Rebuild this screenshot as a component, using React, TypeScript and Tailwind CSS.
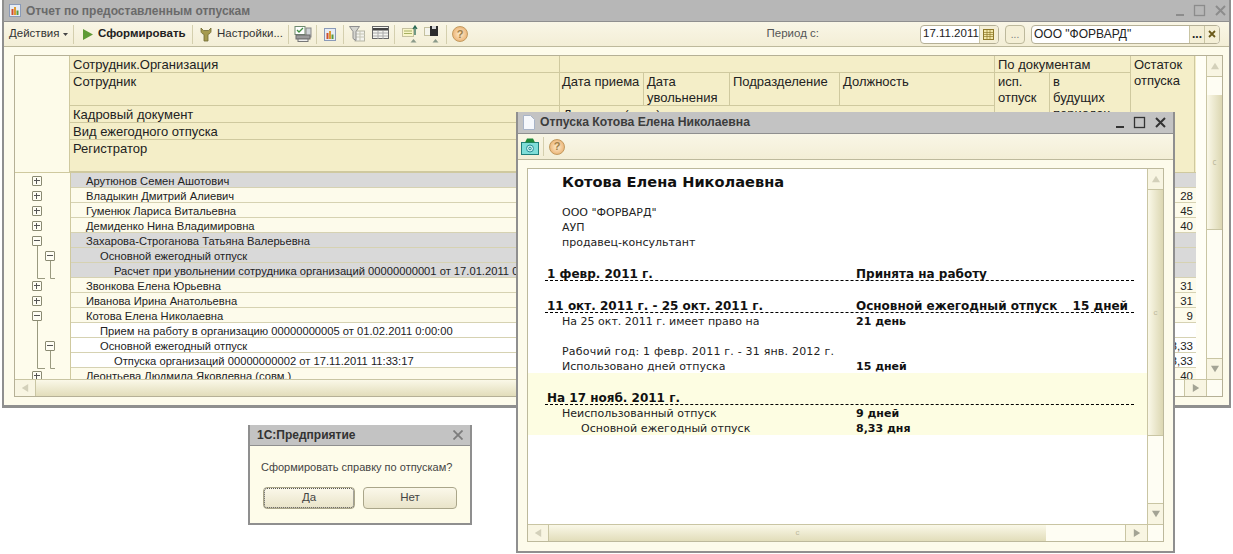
import React from 'react';

const arial = "font-['Liberation_Sans',Arial,sans-serif]";
const doc = "font-['DejaVu_Sans',Verdana,sans-serif]";

// Значок окна: свернуть / развернуть / закрыть
function WinButtons({ color, className }: { color: string; className: string }) {
  return (
    <svg width="50" height="13" viewBox="0 0 50 13" className={className} fill="none" stroke={color}>
      <rect x="0" y="10" width="8" height="2" fill={color} stroke="none" />
      <rect x="18.5" y="1.5" width="10" height="10" strokeWidth="1.3" />
      <path d="M40 2l9 9M49 2l-9 9" strokeWidth="2" />
    </svg>
  );
}

function Sep() {
  return <div className="w-px h-[19px] bg-[#d4cfae] shrink-0" />;
}

function HelpIcon() {
  return (
    <div className="w-[16px] h-[16px] rounded-full bg-radial from-[#fdeccb] to-[#e6a45c] border border-[#c39a5e] flex items-center justify-center text-[11px] leading-none font-bold text-[#a07f48]">
      ?
    </div>
  );
}

function ChartIcon() {
  return (
    <svg width="12" height="13" viewBox="0 0 12 13">
      <rect x="0.5" y="0.5" width="11" height="12" fill="#e6ecf5" stroke="#8a9ab8" />
      <rect x="2.5" y="5" width="2" height="6" fill="#d0502f" />
      <rect x="5" y="3" width="2" height="8" fill="#e09a30" />
      <rect x="7.5" y="6.5" width="2" height="4.5" fill="#5c9a3c" />
    </svg>
  );
}

function PrintIcon() {
  return (
    <svg width="18" height="16" viewBox="0 0 18 16">
      <rect x="1" y="0.5" width="10" height="8" fill="#fff" stroke="#6f8a6f" />
      <path d="M3 4l2 2 4-4" fill="none" stroke="#3f8f3f" strokeWidth="1.3" />
      <rect x="12" y="2" width="5" height="9" fill="#cfd3d6" stroke="#888" />
      <rect x="2" y="9" width="14" height="4" fill="#9a9a9a" stroke="#6a6a6a" />
      <rect x="4" y="13" width="10" height="2.5" fill="#eee" stroke="#777" />
    </svg>
  );
}

function FilterTableIcon() {
  return (
    <svg width="16" height="16" viewBox="0 0 16 16">
      <rect x="6" y="5" width="9.5" height="10" fill="#f3f3ee" stroke="#b5b5a5" />
      <path d="M6 8h10M6 11h10M11 5v10" stroke="#c5c5b5" />
      <path d="M0.5 0.5h10l-3.5 5v9l-3-2v-7z" fill="#d5d5cf" stroke="#8f8f8f" />
    </svg>
  );
}

function TableIcon() {
  return (
    <svg width="17" height="13" viewBox="0 0 17 13">
      <rect x="0.5" y="0.5" width="16" height="12" fill="#f5f5f0" stroke="#666" />
      <rect x="1" y="2" width="15" height="2.5" fill="#444" />
      <path d="M1 7h15M1 10h15M6 5v8M11 5v8" stroke="#aaa" />
    </svg>
  );
}

function SaveIcon({ up }: { up: boolean }) {
  return (
    <svg width="16" height="18" viewBox="0 0 16 18">
      {up ? (
        <>
          <rect x="0.5" y="3.5" width="11" height="8" fill="#f8f5c8" stroke="#c5c1a0" />
          <path d="M2 6h8M2 8.5h8" stroke="#a5b060" />
          <path d="M13 10V2M11 4l2-3 2 3" fill="none" stroke="#2a6a55" strokeWidth="1.3" />
        </>
      ) : (
        <>
          <rect x="0.5" y="2.5" width="7" height="8" fill="#f4f4ec" stroke="#c5c1a0" />
          <rect x="6" y="1" width="8" height="10" fill="#2d2d2d" />
          <rect x="8" y="1" width="4" height="3" fill="#d8d8d8" />
        </>
      )}
      <polygon points="11.5,14 14.5,17.5 8.5,17.5" fill="#8a9a8a" />
    </svg>
  );
}

function WrenchIcon() {
  return (
    <svg width="12" height="15" viewBox="0 0 12 15">
      <path d="M1 1v3.5c0 1.5 2 2.5 3 3V14h4V7.5c1-.5 3-1.5 3-3V1L8.5 3.5h-5z" fill="#a59a4e" stroke="#6f6a33" strokeWidth="0.8" />
    </svg>
  );
}

function Arrow({ dir }: { dir: 'up' | 'down' | 'left' | 'right' }) {
  const pts = { up: '5,1 10,9 0,9', down: '0,1 10,1 5,9', left: '9,0 9,10 1,5', right: '1,0 1,10 9,5' }[dir];
  const fill = dir === 'up' || dir === 'left' ? '#d3d0ba' : '#a3a394';
  return (
    <svg width="8" height="8" viewBox="0 0 10 10">
      <polygon points={pts} fill={fill} />
    </svg>
  );
}

function ScrollV({ before, thumb, className }: { before: number; thumb: number; className: string }) {
  return (
    <div className={`flex flex-col w-[16px] bg-[#fefdf3] border-l border-[#c9c5a3] ${className}`}>
      <div className="h-[21px] shrink-0 flex items-center justify-center border-b border-[#c9c5a3] bg-[#f8f5e2]">
        <Arrow dir="up" />
      </div>
      <div style={{ height: before }} className="shrink-0" />
      <div style={{ height: thumb }} className="shrink-0 bg-gradient-to-r from-[#faf8e8] to-[#dcd7b2] border-b border-[#c9c5a3] flex items-center justify-center text-[#bdb99c] text-[8px]">
        c
      </div>
      <div className="flex-1" />
      <div className="h-[21px] shrink-0 flex items-center justify-center border-t border-[#c9c5a3] bg-[#f8f5e2]">
        <Arrow dir="down" />
      </div>
    </div>
  );
}

function ScrollH({ thumb, className }: { thumb: number; className: string }) {
  return (
    <div className={`flex h-[17px] bg-[#fefdf3] border-t border-[#c9c5a3] ${className}`}>
      <div className="w-[21px] shrink-0 flex items-center justify-center border-r border-[#c9c5a3] bg-[#f8f5e2]">
        <Arrow dir="left" />
      </div>
      <div style={{ width: thumb }} className="shrink-0 bg-gradient-to-b from-[#faf8e8] to-[#e2ddba] flex items-center justify-center text-[#bdb99c] text-[8px]">
        c
      </div>
      <div className="flex-1" />
      <div className="w-[22px] shrink-0 flex items-center justify-center border-l border-[#c9c5a3] bg-[#f8f5e2]">
        <Arrow dir="right" />
      </div>
      <div className="w-[16px] shrink-0 border-l border-[#c9c5a3]" />
    </div>
  );
}

function TreeBox({ minus }: { minus?: boolean }) {
  return (
    <div className="w-[10px] h-[10px] border border-[#8a8a72] rounded-[1px] bg-[#fefdf3] relative z-10">
      <div className="absolute left-[1px] right-[1px] top-[3px] h-px bg-[#555]" />
      {!minus && <div className="absolute top-[1px] bottom-[1px] left-[3px] w-px bg-[#555]" />}
    </div>
  );
}

interface Row {
  text: string;
  level: number;
  box?: 'plus' | 'minus';
  boxLevel?: number;
  value?: string;
  bg: string;
}

const rows: Row[] = [
  { text: 'Арутюнов Семен Ашотович', level: 0, box: 'plus', bg: 'bg-[#d9d9d9]' },
  { text: 'Владыкин Дмитрий Алиевич', level: 0, box: 'plus', value: '28', bg: 'bg-[#fdfbeb]' },
  { text: 'Гуменюк Лариса Витальевна', level: 0, box: 'plus', value: '45', bg: 'bg-[#fdfbeb]' },
  { text: 'Демиденко Нина Владимировна', level: 0, box: 'plus', value: '40', bg: 'bg-[#fdfbeb]' },
  { text: 'Захарова-Строганова Татьяна Валерьевна', level: 0, box: 'minus', bg: 'bg-[#d9d9d9]' },
  { text: 'Основной ежегодный отпуск', level: 1, box: 'minus', boxLevel: 1, bg: 'bg-[#d9d9d9]' },
  { text: 'Расчет при увольнении сотрудника организаций 00000000001 от 17.01.2011 0:00:00', level: 2, bg: 'bg-[#d9d9d9]' },
  { text: 'Звонкова Елена Юрьевна', level: 0, box: 'plus', value: '31', bg: 'bg-[#fdfbeb]' },
  { text: 'Иванова Ирина Анатольевна', level: 0, box: 'plus', value: '31', bg: 'bg-[#fdfbeb]' },
  { text: 'Котова Елена Николаевна', level: 0, box: 'minus', value: '9', bg: 'bg-[#fdfbeb]' },
  { text: 'Прием на работу в организацию 00000000005 от 01.02.2011 0:00:00', level: 1, bg: 'bg-white' },
  { text: 'Основной ежегодный отпуск', level: 1, box: 'minus', boxLevel: 1, value: '8,33', bg: 'bg-white' },
  { text: 'Отпуска организаций 00000000002 от 17.11.2011 11:33:17', level: 2, value: '8,33', bg: 'bg-white' },
  { text: 'Леонтьева Людмила Яковлевна (совм.)', level: 0, box: 'plus', value: '40', bg: 'bg-[#fdfbeb]' },
];

const levelPad = ['pl-[15px]', 'pl-[29px]', 'pl-[43px]'];

const headCell = 'border-b border-r border-[#cfc99f] px-[3px] pt-px leading-[16px] overflow-hidden';

function TableHeader() {
  return (
    <div className="flex h-[117px] border-b border-[#cfc99f] shrink-0">
      <div className="w-[55px] shrink-0 bg-[#fdfbe9] border-r border-[#cfc99f]" />
      <div className={`flex-1 grid grid-cols-[490px_84px_86px_110px_155px_55px_81px_64px] grid-rows-[17px_33px_17px_17px_32px] bg-[#f4eec8] text-[13px] text-[#222] ${arial}`}>
        <div className={`${headCell} col-span-1`}>Сотрудник.Организация</div>
        <div className={`${headCell} col-span-4`} />
        <div className={`${headCell} col-span-2`}>По документам</div>
        <div className={`${headCell} row-span-5 border-b-0`}>Остаток отпуска</div>

        <div className={headCell}>Сотрудник</div>
        <div className={`${headCell} pl-[2px] pr-0`}>Дата приема</div>
        <div className={headCell}>Дата увольнения</div>
        <div className={headCell}>Подразделение</div>
        <div className={headCell}>Должность</div>
        <div className={`${headCell} row-span-4`}>исп. отпуск</div>
        <div className={`${headCell} row-span-4`}>в<br />будущих<br />периодах</div>

        <div className={headCell}>Кадровый документ</div>
        <div className={`${headCell} col-span-4 row-span-3`}>Документ (дата)</div>
        <div className={headCell}>Вид ежегодного отпуска</div>
        <div className={headCell}>Регистратор</div>
      </div>
    </div>
  );
}

function TableRows() {
  return (
    <div className={`relative flex-1 overflow-hidden text-[11.2px] text-[#222] ${arial}`}>
      {rows.map((r, i) => (
        <div key={i} className="flex h-[15px]">
          <div className="w-[56px] shrink-0 border-r border-[#cfc99f] bg-[#fefcec] flex items-center">
            {r.box && (
              <div className={r.boxLevel ? 'ml-[30px]' : 'ml-[17px]'}>
                <TreeBox minus={r.box === 'minus'} />
              </div>
            )}
          </div>
          <div className={`flex-1 min-w-0 flex items-center pt-[2px] border-b border-[#d6d2b2] ${r.bg}`}>
            <div className={`flex-1 min-w-0 whitespace-nowrap overflow-hidden leading-[13px] ${levelPad[r.level]}`}>{r.text}</div>
            <div className="w-[40px] shrink-0 text-right pr-[3px] text-[11.5px] leading-[13px] whitespace-nowrap">{r.value}</div>
          </div>
        </div>
      ))}
      <svg className="absolute left-0 top-0" width="56" height="207" fill="none" stroke="#9a9a80">
        <path d="M22.5 73V105.5H30M35.5 88V105.5H40" />
        <path d="M22.5 148V195.5H30M35.5 178V195.5H40" />
      </svg>
    </div>
  );
}

function MainWindow() {
  return (
    <div className="absolute left-[2px] top-0 w-[1229px] h-[408px] flex flex-col border-x-2 border-b-[3px] border-[#8f8f8f] bg-[#fdfbeb]">
      <div className="h-[22px] shrink-0 bg-[#b7b7b7] flex items-center border-b border-[#8f8f8f]">
        <div className="ml-[5px] mr-[5px]">
          <ChartIcon />
        </div>
        <span className={`text-[12px] font-bold text-[#6a6a6a] ${arial}`}>Отчет по предоставленным отпускам</span>
        <WinButtons color="#8c8c8c" className="ml-auto mr-[3px]" />
      </div>

      <div className={`h-[25px] shrink-0 flex items-center border-b border-[#bdb99c] bg-gradient-to-b from-[#f9f6e6] to-[#f3eed6] text-[11.5px] text-[#333] ${arial}`}>
        <div className="w-[69px] pl-[5px] flex items-center shrink-0">
          Действия
          <svg width="5" height="3" viewBox="0 0 5 3" className="ml-[4px]"><polygon points="0,0 5,0 2.5,3" fill="#444" /></svg>
        </div>
        <Sep />
        <div className="w-[118px] flex items-center pl-[9px] shrink-0 font-bold text-[#222]">
          <svg width="10" height="11" viewBox="0 0 10 11" className="mr-[5px]"><polygon points="0,0 10,5.5 0,11" fill="#5f9a35" /></svg>
          Сформировать
        </div>
        <Sep />
        <div className="w-[95px] flex items-center pl-[7px] shrink-0">
          <WrenchIcon />
          <span className="ml-[5px]">Настройки...</span>
        </div>
        <Sep />
        <div className="w-[27px] flex justify-center shrink-0"><PrintIcon /></div>
        <Sep />
        <div className="w-[26px] flex justify-center shrink-0"><ChartIcon /></div>
        <Sep />
        <div className="w-[50px] flex justify-center gap-[7px] shrink-0"><FilterTableIcon /><TableIcon /></div>
        <Sep />
        <div className="w-[51px] flex justify-center gap-[6px] shrink-0"><SaveIcon up /><SaveIcon up={false} /></div>
        <Sep />
        <div className="w-[26px] flex justify-center shrink-0"><HelpIcon /></div>

        <div className="ml-auto flex items-center pr-[9px]">
          <span className="mr-[101px] text-[#555]">Период с:</span>
          <div className="w-[79px] h-[19px] border border-[#b5b096] rounded-[4px] bg-white flex items-center text-[11.5px] text-[#222] pl-[2px] overflow-hidden">
            <span className="flex-1">17.11.2011</span>
            <div className="w-[21px] h-full border-l border-[#c9c5a3] bg-[#f4efd6] flex items-center justify-center">
              <svg width="11" height="11" viewBox="0 0 11 11"><rect x="0.5" y="0.5" width="10" height="10" fill="#f1e6a8" stroke="#8f7a2a" /><path d="M1 3.5h9M1 5.5h9M1 7.5h9M4 1v9M7 1v9" stroke="#8f7a2a" strokeWidth="0.7" /></svg>
            </div>
          </div>
          <div className="w-[20px] h-[19px] ml-[6px] border border-[#bdb99c] rounded-[4px] bg-[#f4efd6] flex items-center justify-center text-[10px] text-[#777]">...</div>
          <div className="w-[189px] h-[19px] ml-[6px] border border-[#b5b096] rounded-[4px] bg-white flex items-center text-[12px] text-[#222] pl-[2px] overflow-hidden">
            <span className="flex-1">ООО "ФОРВАРД"</span>
            <div className="w-[15px] h-full border-l border-[#c9c5a3] bg-[#f4efd6] flex items-center justify-center font-bold leading-none">...</div>
            <div className="w-[15px] h-full border-l border-[#c9c5a3] bg-[#f4efd6] flex items-center justify-center">
              <svg width="8" height="8" viewBox="0 0 8 8"><path d="M1 1l6 6M7 1l-6 6" stroke="#6b5a1a" strokeWidth="1.8" /></svg>
            </div>
          </div>
        </div>
      </div>

      <div className="flex-1 pl-[10px] pr-[6px] pt-[8px] pb-[8px] flex min-h-0">
        <div className="flex-1 flex flex-col border border-[#b5b096] bg-[#fffef5] min-w-0">
          <div className="flex-1 flex min-h-0">
            <div className="w-[1181px] flex flex-col shrink-0 min-h-0">
              <TableHeader />
              <TableRows />
            </div>
            <div className="flex-1" />
            <ScrollV before={18} thumb={135} className="shrink-0" />
          </div>
          <ScrollH thumb={965} className={arial} />
        </div>
      </div>
    </div>
  );
}

function DocHead({ left, right, extra }: { left: string; right?: string; extra?: string }) {
  return (
    <div className="ml-[17px] w-[589px] h-[16px] border-b border-dashed border-black flex items-center pl-[2px] pt-[2px] font-bold text-[12px] leading-[14px] text-[#111]">
      <div className="w-[309px] shrink-0">{left}</div>
      <div className="flex-1">{right}</div>
      {extra && <div className="pr-[6px]">{extra}</div>}
    </div>
  );
}

function DocLine({ left, right, indent }: { left: React.ReactNode; right?: string; indent?: boolean }) {
  return (
    <div className={`flex h-[15px] items-center pt-[2px] text-[11px] leading-[13px] text-[#222] ${indent ? 'pl-[53px]' : 'pl-[34px]'}`}>
      <div className={`${indent ? 'w-[275px]' : 'w-[294px]'} shrink-0`}>{left}</div>
      {right && <div className="font-bold text-[#111]">{right}</div>}
    </div>
  );
}

function VacationWindow() {
  return (
    <div className={`absolute left-[516px] top-[112px] w-[659px] h-[441px] flex flex-col border-x-2 border-b-2 border-[#8f8f8f] bg-[#fdfbeb] ${arial}`}>
      <div className="h-[22px] shrink-0 bg-[#c3c3c3] flex items-center border-b border-[#8f8f8f]">
        <svg width="12" height="15" viewBox="0 0 12 15" className="ml-[5px] mr-[5px]">
          <path d="M0.5 0.5h7l4 4v10h-11z" fill="#f6f8fc" stroke="#a8b4c8" />
        </svg>
        <span className="text-[12.2px] font-bold text-[#3c3c3c]">Отпуска Котова Елена Николаевна</span>
        <WinButtons color="#333" className="ml-auto mr-[7px]" />
      </div>
      <div className="h-[26px] shrink-0 flex items-center border-b border-[#bdb99c] bg-gradient-to-b from-[#f9f6e6] to-[#f3eed6]">
        <svg width="18" height="17" viewBox="0 0 18 17" className="ml-[3px] mr-[4px]">
          <rect x="0.5" y="4.5" width="17" height="12" fill="#7fded8" stroke="#1f7f7a" />
          <path d="M4 4.5l2-4h6l2 4z" fill="#1f8a3a" />
          <circle cx="9" cy="10.5" r="3.5" fill="#c8f2ee" stroke="#2a8f98" />
          <circle cx="9" cy="10.5" r="1.3" fill="none" stroke="#2a8f98" />
        </svg>
        <Sep />
        <div className="ml-[5px]"><HelpIcon /></div>
      </div>
      <div className="flex-1 pl-[9px] pr-[9px] pt-[8px] pb-[9px] min-h-0 flex">
        <div className="flex-1 border border-[#bdb99c] bg-white flex flex-col min-w-0">
          <div className="flex-1 flex min-h-0">
            <div className={`flex-1 min-w-0 pt-[3px] ${doc}`}>
              <div className="pl-[34px] h-[17px] pt-px text-[14.6px] leading-[17px] font-bold text-[#111]">Котова Елена Николаевна</div>
              <div className="mt-[15px]">
                <DocLine left={'ООО "ФОРВАРД"'} />
                <DocLine left="АУП" />
                <DocLine left="продавец-консультант" />
              </div>
              <div className="mt-[16px]">
                <DocHead left="1 февр. 2011 г." right="Принята на работу" />
              </div>
              <div className="mt-[16px]">
                <DocHead left="11 окт. 2011 г. - 25 окт. 2011 г." right="Основной ежегодный отпуск" extra="15 дней" />
                <DocLine left="На 25 окт. 2011 г. имеет право на" right="21 день" />
              </div>
              <div className="mt-[15px]">
                <DocLine left={<span className="tracking-[0.2px]">Рабочий год: 1 февр. 2011 г. - 31 янв. 2012 г.</span>} />
                <DocLine left="Использовано дней отпуска" right="15 дней" />
              </div>
              <div className="h-[62px] pt-[16px] bg-[#fdfde2]">
                <DocHead left="На 17 нояб. 2011 г." />
                <DocLine left="Неиспользованный отпуск" right="9 дней" />
                <DocLine left="Основной ежегодный отпуск" right="8,33 дня" indent />
              </div>
            </div>
            <ScrollV before={0} thumb={246} className="shrink-0" />
          </div>
          <ScrollH thumb={497} />
        </div>
      </div>
    </div>
  );
}

function ConfirmDialog() {
  return (
    <div className={`absolute left-[248px] top-[425px] w-[224px] h-[100px] flex flex-col border-x-2 border-b-2 border-[#8f8f8f] bg-[#fefcea] ${arial}`}>
      <div className="h-[21px] shrink-0 bg-[#c3c3c3] flex items-center justify-between border-b border-[#8f8f8f] pl-[7px] pr-[7px]">
        <span className="text-[12px] font-bold text-[#333]">1С:Предприятие</span>
        <svg width="10" height="10" viewBox="0 0 10 10"><path d="M0.5 0.5l9 9M9.5 0.5l-9 9" stroke="#7c7c7c" strokeWidth="1.8" /></svg>
      </div>
      <div className="pl-[11px] pt-[14px] text-[11px] leading-[14px] text-[#444]">Сформировать справку по отпускам?</div>
      <div className="flex gap-[8px] pl-[13px] pt-[13px] text-[11.5px] text-[#444]">
        <div className="w-[92px] h-[22px] rounded-[4px] border border-[#aaa68a] bg-gradient-to-b from-[#fbf8ea] to-[#e9e4c9] flex items-center justify-center outline-1 outline-dotted -outline-offset-2 outline-[#555]">Да</div>
        <div className="w-[94px] h-[22px] rounded-[4px] border border-[#aaa68a] bg-gradient-to-b from-[#fbf8ea] to-[#e9e4c9] flex items-center justify-center">Нет</div>
      </div>
    </div>
  );
}

export default function App() {
  return (
    <div className="relative w-[1233px] h-[554px] overflow-hidden bg-white">
      <MainWindow />
      <ConfirmDialog />
      <VacationWindow />
    </div>
  );
}
